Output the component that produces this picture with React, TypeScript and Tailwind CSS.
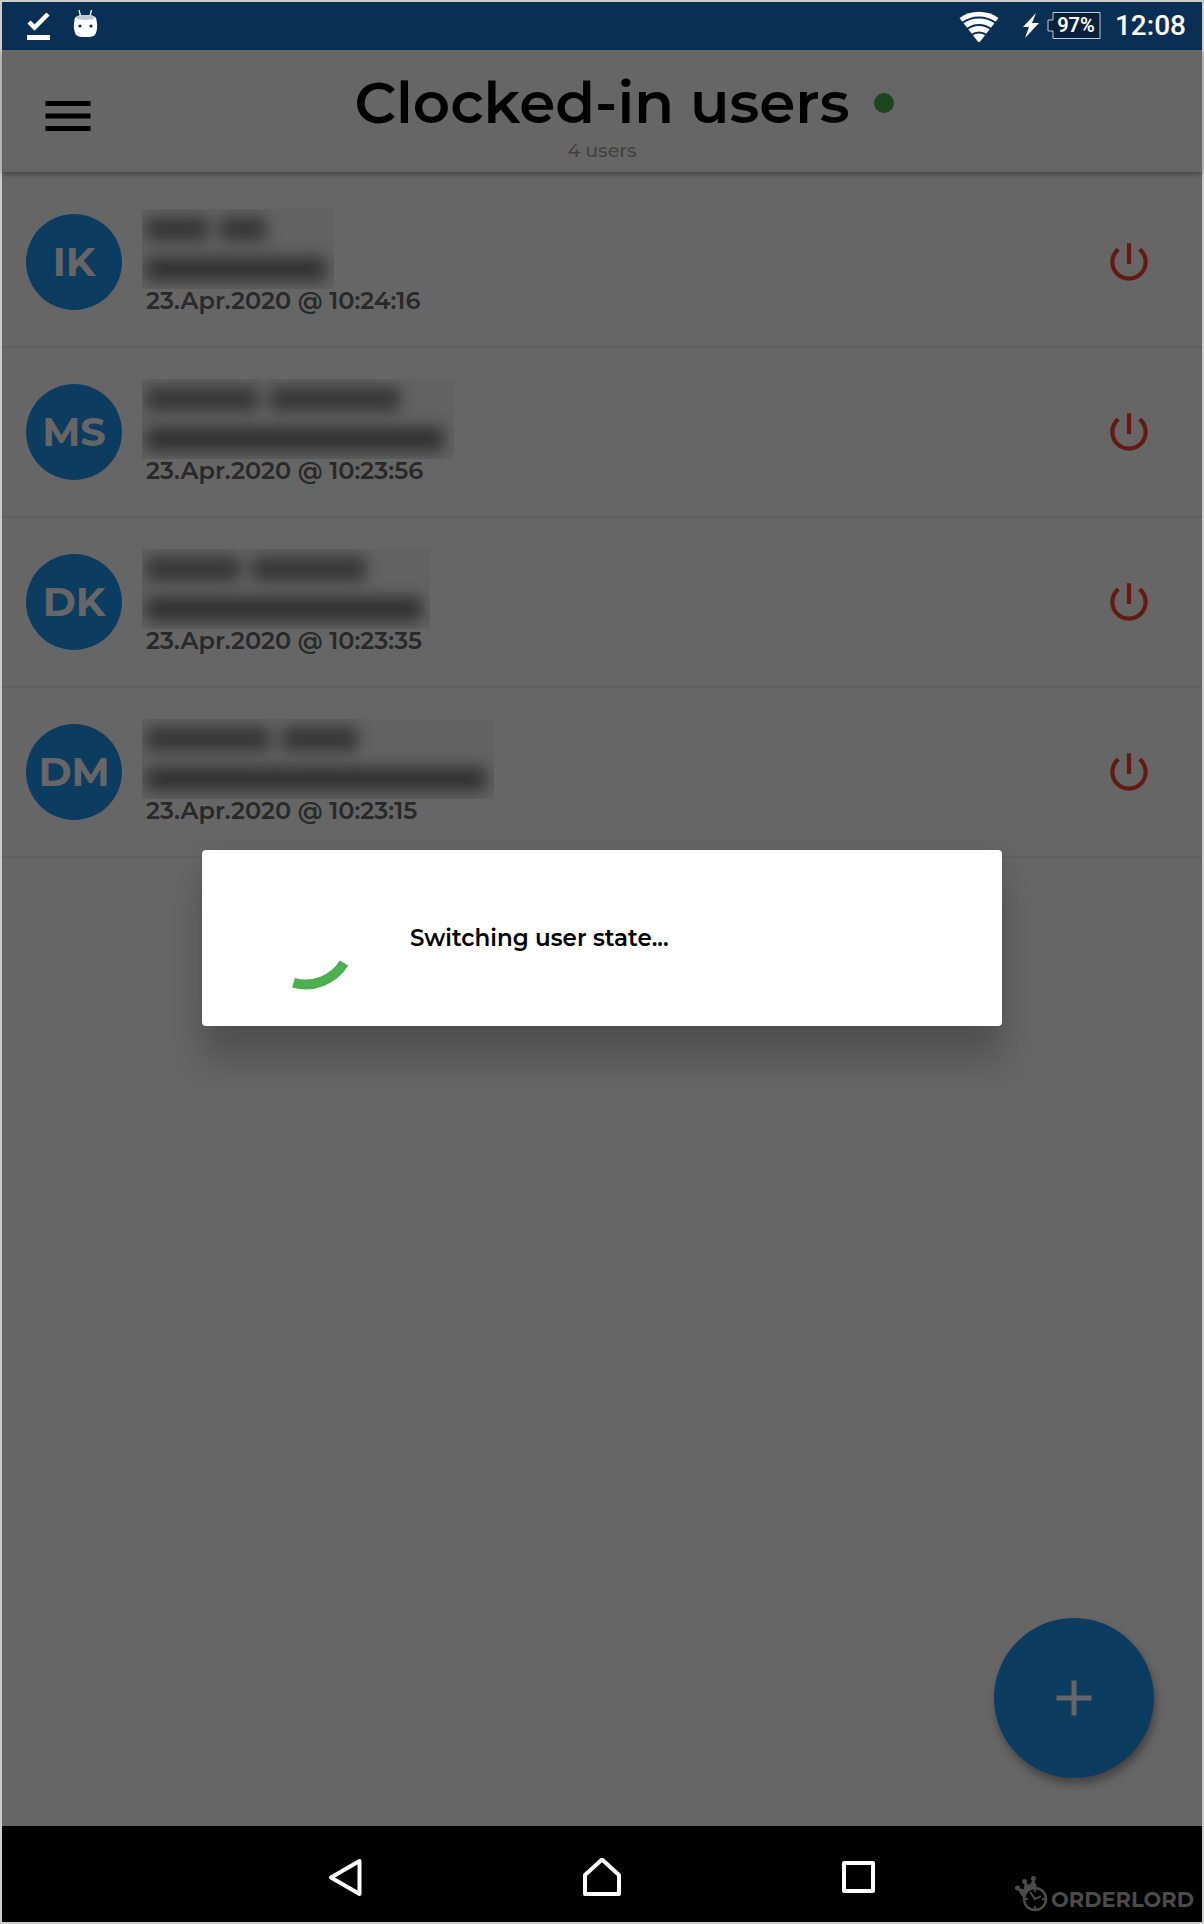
import React from "react";

type User = {
  initials: string;
  time: string;
  name: string[];
  email: string;
  box: string;
};

const users: User[] = [
  { initials: "IK", time: "23.Apr.2020 @ 10:24:16", name: ["w-[62px]", "w-[46px]"], email: "w-[180px]", box: "w-[192px]" },
  { initials: "MS", time: "23.Apr.2020 @ 10:23:56", name: ["w-[112px]", "w-[130px]"], email: "w-[298px]", box: "w-[312px]" },
  { initials: "DK", time: "23.Apr.2020 @ 10:23:35", name: ["w-[94px]", "w-[114px]"], email: "w-[276px]", box: "w-[288px]" },
  { initials: "DM", time: "23.Apr.2020 @ 10:23:15", name: ["w-[124px]", "w-[76px]"], email: "w-[340px]", box: "w-[352px]" },
];

function StatusBar() {
  return (
    <div className="flex h-12 shrink-0 items-center bg-[#0a2f54] pl-6 pr-4 text-white">
      <svg className="h-8 w-7" viewBox="0 0 28 32" fill="none" aria-hidden="true">
        <path d="M3 12 8.500 17.500 22 4" stroke="white" strokeWidth="4.500" />
        <path d="M1 25h23v5H1z" fill="white" />
      </svg>
      <svg className="ml-[18px] h-8 w-7" viewBox="0 0 28 32" aria-hidden="true">
        <path d="M7 0l1.500 6M19.500 0 18 6" stroke="white" strokeWidth="1.300" />
        <path d="M2.500 10C2.500 6 7 5 13.500 5S24.500 6 24.500 10c1 5 1 10-1 14-1 2.500-5 3-10 3s-9-.5-10-3c-2-4-2-9-1-14z" fill="white" />
        <ellipse cx="13.500" cy="7.500" rx="9.500" ry="2.500" fill="#bcc6d6" />
        <circle cx="8" cy="16" r="1.600" fill="#0a2f54" />
        <circle cx="19" cy="16" r="1.600" fill="#0a2f54" />
      </svg>
      <div className="ml-auto flex items-center">
        <svg className="h-8 w-10" viewBox="0 0 40 32" aria-hidden="true">
          <path d="M.5 8C12-.5 28-.5 39.500 8L20 33z" fill="white" />
          <path d="M3 13C13.500 5.500 26.500 5.500 37 13M8 19C15 13.500 25 13.500 32 19M12.500 25C17 21.500 23 21.500 27.500 25" fill="none" stroke="#0a2f54" strokeWidth="2" />
        </svg>
        <svg className="ml-6 h-7 w-4" viewBox="0 0 16 28" aria-hidden="true">
          <path d="M13 1 0 15h6L2 26 16 11H9z" fill="white" />
        </svg>
        <svg className="ml-2 h-7 w-[54px]" viewBox="0 0 54 28" role="img" aria-label="Battery 97%">
          <path d="M6 .5h47v26H6v-7.500H1v-11h5z" fill="#08203a" stroke="#c3cbd4" />
          <text x="29" y="20" textAnchor="middle" fill="white" fontSize="20" fontWeight="600" fontFamily="Roboto, sans-serif">97%</text>
        </svg>
        <span className="ml-3.5 font-[Roboto,sans-serif] text-[28px] leading-8 font-medium">12:08</span>
      </div>
    </div>
  );
}

function Header() {
  return (
    <header className="relative z-10 flex h-[122px] items-center bg-white pl-9 shadow-[0_2px_5px_rgba(0,0,0,0.35)]">
      <button type="button" aria-label="Open menu" className="mt-2.5 w-[60px]">
        <svg className="size-[60px]" viewBox="0 0 24 24" aria-hidden="true">
          <path d="M3 18h18v-2H3v2zm0-5h18v-2H3v2zm0-7v2h18V6H3z" />
        </svg>
      </button>
      <div className="flex flex-1 flex-col items-center pt-3 pr-24">
        <h1 className="relative text-[58px] leading-[68px] font-semibold text-black">
          Clocked-in users
          <span className="absolute top-6 left-full ml-6 size-5 rounded-full bg-[#4caf50]" />
        </h1>
        <p className="text-[19px] leading-7 font-medium text-[#a5a5a5]">4 users</p>
      </div>
    </header>
  );
}

function UserRow({ user }: { user: User }) {
  return (
    <li className="flex h-[170px] items-center border-b-2 border-[#efefef] pr-12 pl-6">
      <div className="flex size-24 shrink-0 items-center justify-center rounded-full bg-[#2196f3] text-[40px] font-bold text-white">
        {user.initials}
      </div>
      <div className="ml-5 flex flex-1 flex-col pb-0.5">
        <div className={`flex h-20 flex-col gap-4 overflow-hidden bg-black/3 pt-2 pl-1 ${user.box}`} aria-hidden="true">
          <div className="flex gap-3 blur-[8px]">
            {user.name.map((w, i) => (
              <span key={i} className={`h-6 bg-[#848484] ${w}`} />
            ))}
          </div>
          <span className={`h-6 bg-[#787878] blur-[8px] ${user.email}`} />
        </div>
        <time className="pl-1 text-[24px] leading-6 font-semibold text-[#666]">{user.time}</time>
      </div>
      <button type="button" aria-label={`Clock out ${user.initials}`}>
        <svg className="size-[50px]" viewBox="0 0 24 24" fill="#f44336" aria-hidden="true">
          <path d="M13 3h-2v10h2V3zm4.830 2.170-1.420 1.420C17.990 7.860 19 9.810 19 12c0 3.870-3.130 7-7 7s-7-3.130-7-7c0-2.190 1.010-4.140 2.580-5.420L6.170 5.170C4.230 6.820 3 9.260 3 12c0 4.970 4.030 9 9 9s9-4.030 9-9c0-2.740-1.230-5.180-3.170-6.830z" />
        </svg>
      </button>
    </li>
  );
}

function LoadingDialog() {
  return (
    <div className="absolute inset-0 z-20 flex items-center justify-center bg-black/60">
      <div
        role="dialog"
        aria-label="Switching user state"
        className="flex h-44 w-2/3 items-center rounded bg-white pl-[54px] shadow-[0_36px_32px_rgba(0,0,0,0.2),0_0_20px_rgba(0,0,0,0.08)]"
      >
        <svg className="size-[100px] overflow-visible" viewBox="0 0 100 100" aria-hidden="true">
          <path d="M37.500 94.700A45 45 0 0 0 88 75" fill="none" stroke="#4caf50" strokeWidth="10" />
        </svg>
        <p className="ml-[54px] text-[23px] leading-8 font-semibold text-black">Switching user state...</p>
      </div>
    </div>
  );
}

function Brand() {
  return (
    <div className="absolute right-2 bottom-2 flex items-end text-[#4a4a4a]">
      <svg className="mb-0.5 h-9 w-9" viewBox="0 0 36 36" fill="none" stroke="currentColor" aria-hidden="true">
        <circle cx="20" cy="23" r="11" strokeWidth="2.500" />
        <path d="M20 13v3M20 33v-3M10 23h3M30 23h-3M15 16l5 7 6-3" strokeWidth="1.800" />
        <path d="M1.500 12 7.500 21q3-8 14.500-10.500L18.500 3 14.500 9 9.500 6 9 13z" fill="currentColor" stroke="none" />
        <circle cx="2.500" cy="12" r="2.500" fill="currentColor" stroke="none" />
        <circle cx="9.500" cy="5.500" r="2.500" fill="currentColor" stroke="none" />
        <circle cx="18.500" cy="2.500" r="2.500" fill="currentColor" stroke="none" />
      </svg>
      <span className="text-[21px] leading-7 font-bold">ORDERLORD</span>
    </div>
  );
}

function NavBar() {
  return (
    <nav className="relative flex h-24 shrink-0 items-center justify-center gap-[216px] bg-black pt-2">
      <button type="button" aria-label="Back">
        <svg className="size-10" viewBox="0 0 40 40" fill="none" stroke="white" strokeWidth="4" strokeLinejoin="round" aria-hidden="true">
          <path d="M33.500 3v33L5 19.500z" />
        </svg>
      </button>
      <button type="button" aria-label="Home">
        <svg className="size-10" viewBox="0 0 40 40" fill="none" stroke="white" strokeWidth="4" strokeLinejoin="round" aria-hidden="true">
          <path d="M20 1.500 37 17v19H3V17z" />
        </svg>
      </button>
      <button type="button" aria-label="Recent apps">
        <svg className="size-10" viewBox="0 0 40 40" fill="none" stroke="white" strokeWidth="4" strokeLinejoin="round" aria-hidden="true">
          <path d="M6 5h29v28H6z" />
        </svg>
      </button>
      <Brand />
    </nav>
  );
}

export default function App() {
  return (
    <div className="flex min-h-screen flex-col border-2 border-[#ccc] font-[Montserrat,Inter,sans-serif]">
      <StatusBar />
      <main className="relative flex flex-1 flex-col bg-white">
        <Header />
        <ul className="pt-[6px]">
          {users.map((u) => (
            <UserRow key={u.initials} user={u} />
          ))}
        </ul>
        <button
          type="button"
          aria-label="Add user"
          className="absolute right-12 bottom-12 flex size-40 items-center justify-center rounded-full bg-[#2196f3] shadow-[2px_6px_10px_rgba(0,0,0,0.35)]"
        >
          <svg className="size-[60px]" viewBox="0 0 24 24" fill="white" aria-hidden="true">
            <path d="M19 13h-6v6h-2v-6H5v-2h6V5h2v6h6v2z" />
          </svg>
        </button>
        <LoadingDialog />
      </main>
      <NavBar />
    </div>
  );
}
